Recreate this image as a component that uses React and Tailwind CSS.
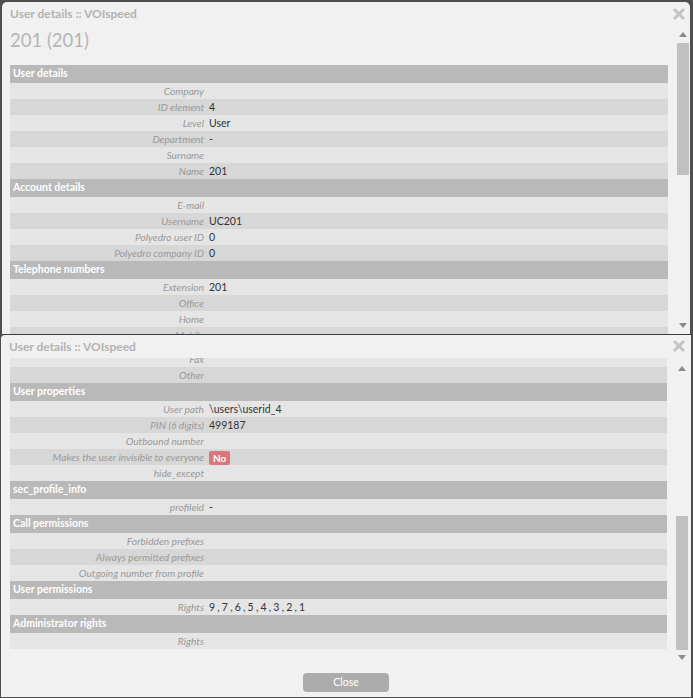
const font = { fontFamily: 'Lato, "Open Sans", sans-serif' };

const topSections = [
  {
    title: 'User details',
    rows: [
      ['Company', ''],
      ['ID element', '4'],
      ['Level', 'User'],
      ['Department', '-'],
      ['Surname', ''],
      ['Name', '201'],
    ],
  },
  {
    title: 'Account details',
    rows: [
      ['E-mail', ''],
      ['Username', 'UC201'],
      ['Polyedro user ID', '0'],
      ['Polyedro company ID', '0'],
    ],
  },
  {
    title: 'Telephone numbers',
    rows: [
      ['Extension', '201'],
      ['Office', ''],
      ['Home', ''],
      ['Mobile', ''],
      ['Fax', ''],
      ['Other', ''],
    ],
  },
];

const bottomSections = [
  {
    title: null,
    rows: [
      ['Fax', ''],
      ['Other', ''],
    ],
  },
  {
    title: 'User properties',
    rows: [
      ['User path', '\\users\\userid_4'],
      ['PIN (6 digits)', '499187'],
      ['Outbound number', ''],
      ['Makes the user invisible to everyone', 'NO_BADGE'],
      ['hide_except', ''],
    ],
  },
  { title: 'sec_profile_info', rows: [['profileid', '-']] },
  {
    title: 'Call permissions',
    rows: [
      ['Forbidden prefixes', ''],
      ['Always permitted prefixes', ''],
      ['Outgoing number from profile', ''],
    ],
  },
  { title: 'User permissions', rows: [['Rights', 'RIGHTS']] },
  { title: 'Administrator rights', rows: [['Rights', '']] },
];

function Value({ v }) {
  if (v === 'NO_BADGE') {
    return (
      <span className="inline-flex items-center h-[14px] px-[4px] rounded-[2px] bg-[#d9787a] text-white font-bold text-[10px] leading-none align-middle">
        No
      </span>
    );
  }
  if (v === 'RIGHTS') {
    return <span className="tracking-[2.2px]">9,7,6,5,4,3,2,1</span>;
  }
  return <span>{v}</span>;
}

function Sections({ sections }) {
  return (
    <div className="flex flex-col shrink-0">
      {sections.map((s, si) => (
        <div key={si} className="flex flex-col shrink-0">
          {s.title && (
            <div className="h-[18px] shrink-0 bg-[#b9b9b9] text-white font-bold text-[10.5px] flex items-center pl-[3px]">
              {s.title}
            </div>
          )}
          {s.rows.map(([label, v], i) => (
            <div
              key={i}
              className={`h-[16px] shrink-0 flex items-baseline leading-[16px] ${i % 2 === 0 ? 'bg-[#e5e5e5]' : 'bg-[#d7d7d7]'}`}
            >
              <div className="w-[194px] text-right italic text-[10.2px] text-[#999] shrink-0">{label}</div>
              <div className="pl-[5px] text-[10.5px] text-[#333]">
                <Value v={v} />
              </div>
            </div>
          ))}
        </div>
      ))}
    </div>
  );
}

function CloseX({ className }) {
  return (
    <svg viewBox="0 0 12 12" className={className}>
      <path d="M2 2 L10 10 M10 2 L2 10" stroke="#c3c3c3" strokeWidth="3" strokeLinecap="round" />
    </svg>
  );
}

function Arrow({ up }) {
  return (
    <svg viewBox="0 0 8 5" className="w-[8px] h-[5px]">
      <path d={up ? 'M0 5 L4 0 L8 5 Z' : 'M0 0 L8 0 L4 5 Z'} fill="#8a8a8a" />
    </svg>
  );
}

export default function App() {
  return (
    <div className="w-[693px] h-[698px] bg-[#4e4e4e] overflow-hidden flex flex-col" style={font}>
      {/* back window */}
      <div className="mt-[2px] ml-[2px] mr-[3px] h-[332px] shrink-0 bg-[#f1f1f1] rounded-t-[5px] overflow-hidden flex flex-col relative">
        <div className="h-[26px] shrink-0 pl-[8px] pt-[3px] text-[12px] font-bold text-[#b3b3b3]">
          User details :: VOIspeed
        </div>
        <CloseX className="absolute right-[5px] top-[6px] w-[12px] h-[12px]" />
        <div className="flex flex-1 min-h-0">
          <div className="w-[658px] ml-[8px] flex flex-col">
            <div className="h-[37px] shrink-0 text-[18.5px] text-[#b5b5b5] leading-none pt-[3px]">201 (201)</div>
            <Sections sections={topSections} />
          </div>
          <div className="w-[12px] ml-[9px] flex flex-col items-center pt-[4px]">
            <Arrow up />
            <div className="w-[12px] h-[132px] mt-[6px] bg-[#c0c0c0]" />
            <div className="flex-1" />
            <div className="mb-[6px]">
              <Arrow />
            </div>
          </div>
        </div>
      </div>

      {/* front window */}
      <div className="ml-[1px] mr-[2px] h-[363px] shrink-0 bg-[#f1f1f1] border-t border-[#3d3d3d] rounded-tl-[4px] flex flex-col relative">
        <div className="h-[23px] shrink-0 pl-[8px] pt-[3px] text-[12px] font-bold text-[#b3b3b3]">
          User details :: VOIspeed
        </div>
        <CloseX className="absolute right-[6px] top-[5px] w-[12px] h-[12px]" />
        <div className="h-[304px] shrink-0 flex">
          <div className="w-[657px] ml-[9px] overflow-hidden flex flex-col">
            <div className="-mt-[7px]">
              <Sections sections={bottomSections} />
            </div>
          </div>
          <div className="w-[12px] ml-[9px] flex flex-col items-center pt-[8px]">
            <Arrow up />
            <div className="flex-1" />
            <div className="w-[12px] h-[134px] bg-[#c0c0c0]" />
            <div className="mt-[5px] mb-[2px]">
              <Arrow />
            </div>
          </div>
        </div>
        <div className="flex-1 flex justify-center pt-[11px]">
          <button
            type="button"
            className="w-[86px] h-[19px] rounded-[4px] bg-[#acacac] text-white text-[10.5px] flex items-center justify-center"
          >
            Close
          </button>
        </div>
      </div>
    </div>
  );
}
